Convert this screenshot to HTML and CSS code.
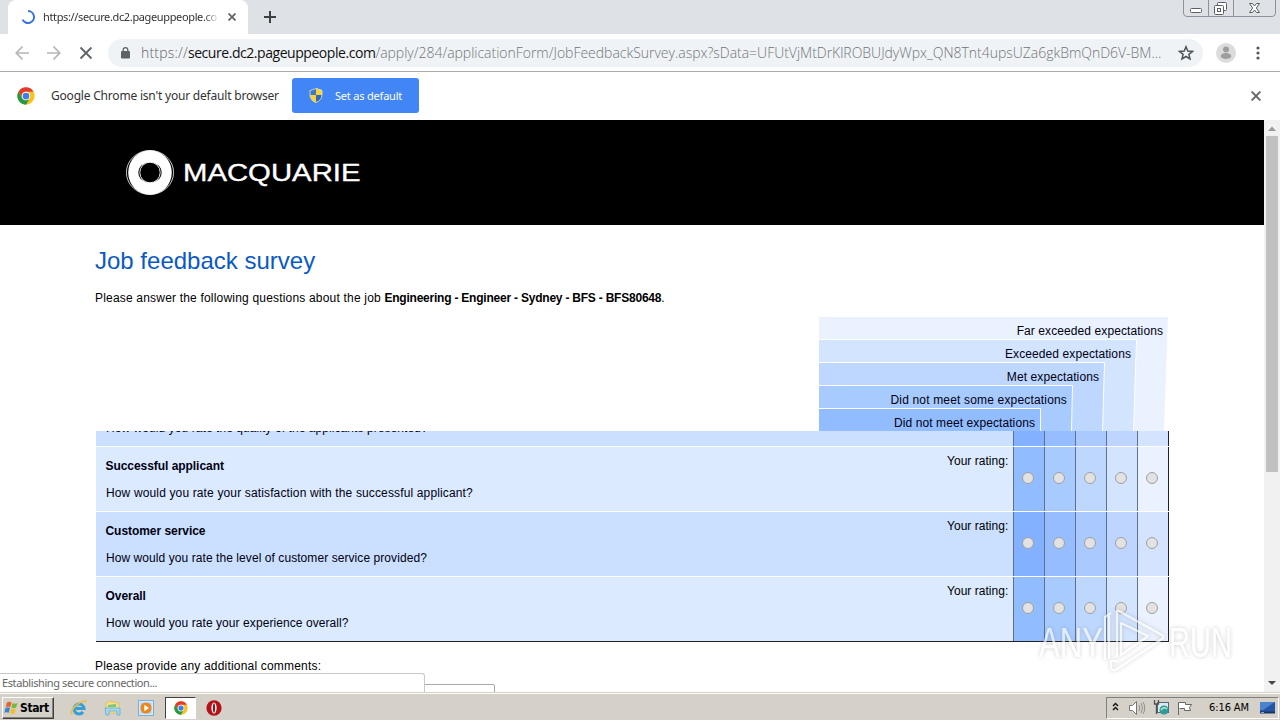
FILE: index.html
```html
<!DOCTYPE html>
<html lang="en">
<head>
<meta charset="utf-8">
<title>Job feedback survey</title>
<link rel="stylesheet" href="styles.css">
</head>
<body>
<svg class="defs" width="0" height="0">
  <symbol id="chrome" viewBox="0 0 48 48">
    <circle cx="24" cy="24" r="23" fill="#fbc116"/>
    <path d="M4 12.5A23 23 0 0 1 44 12.5H24A11.5 11.5 0 0 0 14 29.8Z" fill="#e33b2e"/>
    <path d="M4 12.5A23 23 0 0 0 24 47L34 29.8A11.5 11.5 0 0 1 14 29.8Z" fill="#229a4a"/>
    <circle cx="24" cy="24" r="11.5" fill="#fff"/><circle cx="24" cy="24" r="9" fill="#3f7de8"/>
  </symbol>
</svg>
<div class="screen">
  <div class="tabstrip">
    <div class="tab">
      <svg class="spinner" width="14" height="14" viewBox="0 0 14 14"><path d="M7 1A6 6 0 1 1 1.6 9.6" fill="none" stroke="#3b73dd" stroke-width="2"/></svg>
      <span class="tab-title">https://secure.dc2.pageuppeople.co</span>
      <svg width="8" height="8" viewBox="0 0 8 8"><path d="M.5.5l7 7M7.500.5l-7 7" stroke="#5f6368" stroke-width="1.7"/></svg>
    </div>
    <svg class="newtab" width="12" height="12" viewBox="0 0 12 12"><path d="M6 0v12M0 6h12" stroke="#3c4043" stroke-width="2"/></svg>
    <div class="winbtns">
      <svg width="94" height="17" viewBox="0 0 94 17" fill="none" stroke="#8e929b">
        <path d="M.5 0v13q0 3.500 3.500 3.500h85q3.500 0 3.500-3.500V0M25.500 0v16M50.500 0v16"/>
        <rect x="7.500" y="8.500" width="11" height="4" rx="1" stroke="#5b5e66" fill="#fff"/>
        <g stroke="#5b5e66" fill="#fff"><rect x="34.500" y="2.500" width="9" height="8" rx="1"/><rect x="31.500" y="5.500" width="9" height="9" rx="1"/><rect x="34.500" y="8.500" width="3" height="3"/></g>
        <path d="M66.500 3.500h3l2 2.500 2-2.500h3l-3.200 4.500 3.200 4.500h-3l-2-2.500-2 2.500h-3l3.200-4.500z" stroke="#5b5e66" fill="#fff"/>
      </svg>
    </div>
  </div>

  <div class="toolbar">
    <svg class="nav" width="78" height="14" viewBox="0 0 78 14" fill="none" stroke-width="1.700">
      <path d="M14 7H1M7.500.7L1.200 7l6.300 6.300" stroke="#b5b7ba"/>
      <path d="M32 7h13M38.500.7L44.800 7l-6.300 6.300" stroke="#b5b7ba"/>
      <path d="M65.500 1.500l11 11M76.500 1.500l-11 11" stroke="#5f6368" stroke-width="1.800"/>
    </svg>
    <div class="omnibox">
      <svg class="lock" width="9" height="12" viewBox="0 0 9 12"><rect y="4" width="9" height="7.500" rx="1" fill="#5f6368"/><path d="M2.200 4.500V3a2.300 2.300 0 0 1 4.600 0v1.500" fill="none" stroke="#5f6368" stroke-width="1.300"/></svg>
      <div class="url"><span class="u1">https://</span><span class="u2">secure.dc2.pageuppeople.com</span><span class="u3">/apply/284/applicationForm/JobFeedbackSurvey.aspx?sData=UFUtVjMtDrKlROBUJdyWpx_QN8Tnt4upsUZa6gkBmQnD6V-BM...</span></div>
      <svg class="star" width="16" height="16" viewBox="0 0 16 16"><path d="M8 1.700l1.800 4.300 4.700.4-3.600 3 1.100 4.600-4-2.500L4 14l1.100-4.600-3.600-3 4.700-.4z" fill="none" stroke="#50545a" stroke-width="1.500"/></svg>
    </div>
    <svg class="avatar" width="20" height="20" viewBox="0 0 20 20"><circle cx="10" cy="10" r="10" fill="#dcdcdd"/><circle cx="10" cy="6.500" r="3" fill="#9c9ea0"/><ellipse cx="10" cy="13" rx="5.300" ry="3" fill="#9c9ea0"/></svg>
    <svg class="menu" width="4" height="14" viewBox="0 0 4 14" fill="#55595e"><circle cx="2" cy="2" r="1.600"/><circle cx="2" cy="7" r="1.600"/><circle cx="2" cy="12" r="1.600"/></svg>
  </div>

  <div class="infobar">
    <svg width="18" height="18"><use href="#chrome"/></svg>
    <span class="infotext">Google Chrome isn't your default browser</span>
    <div class="setbtn">
      <svg width="14" height="15" viewBox="0 0 14 15"><path d="M7 0L1 2v5q0 5 6 8z" fill="#3c77c9"/><path d="M7 0l6 2v5q0 5-6 8z" fill="#f8d338"/><path d="M1 7h6v8Q1 12 1 7z" fill="#f8d338"/><path d="M7 7h6q0 5-6 8z" fill="#3369b5"/><path d="M7 .5l6 2V7q0 5-6 7.500Q1 12 1 7V2.500z" fill="none" stroke="#d9dac1" stroke-width=".9"/></svg>
      <span>Set as default</span>
    </div>
    <svg class="infoclose" width="10" height="10" viewBox="0 0 10 10"><path d="M.6.6l8.800 8.800M9.400.6L.6 9.400" stroke="#606367" stroke-width="1.900"/></svg>
  </div>

  <div class="viewport">
    <div class="page">
      <div class="brand">
        <svg width="240" height="46" viewBox="0 0 240 46">
          <ellipse cx="24" cy="22.500" rx="23.600" ry="22" fill="none" stroke="#ddd" stroke-width=".9"/>
          <ellipse cx="24" cy="22.500" rx="21.800" ry="22.200" fill="#fff"/>
          <ellipse cx="24" cy="22.500" rx="11.600" ry="10.300" fill="#000"/>
          <ellipse cx="24" cy="22.500" rx="10.200" ry="10.300" fill="none" stroke="#eee" stroke-width="1"/>
          <text class="wordmark" x="57" y="31" textLength="177.500" lengthAdjust="spacingAndGlyphs">MACQUARIE</text>
        </svg>
      </div>
      <div class="content">
        <h1>Job feedback survey</h1>
        <p class="intro">Please answer the following questions about the job <b>Engineering - Engineer - Sydney - BFS - BFS80648</b>.</p>
        <div class="legend">
          <svg class="steps" width="350" height="114" viewBox="0 0 350 114">
            <path d="M0 0H349L345 114H0z" fill="#eaf2ff"/>
            <path d="M-1 22.500H317.500L314.500 115H-1z" fill="#d3e4ff" stroke="#fff"/>
            <path d="M-1 45.500H285.500L283.500 115H-1z" fill="#bdd7ff" stroke="#fff"/>
            <path d="M-1 68.500H253.500L252.500 115H-1z" fill="#a7caff" stroke="#fff"/>
            <path d="M-1 91.500H221.500V115H-1z" fill="#91bcff" stroke="#fff"/>
          </svg>
          <div class="l1">Far exceeded expectations</div>
          <div class="l2">Exceeded expectations</div>
          <div class="l3">Met expectations</div>
          <div class="l4">Did not meet some expectations</div>
          <div class="l5">Did not meet expectations</div>
        </div>
        <div class="survey">
          <div class="row even cut">
            <div class="q"><p>How would you rate the quality of the applicants presented?</p></div>
            <i class="c1"></i><i class="c2"></i><i class="c3"></i><i class="c4"></i><i class="c5"></i>
          </div>
          <div class="row odd">
            <div class="q"><b>Successful applicant</b><p class="wide">How would you rate your satisfaction with the successful applicant?</p></div><span class="yr">Your rating:</span>
            <i class="c1"><u></u></i><i class="c2"><u></u></i><i class="c3"><u></u></i><i class="c4"><u></u></i><i class="c5"><u></u></i>
          </div>
          <div class="row even">
            <div class="q"><b>Customer service</b><p>How would you rate the level of customer service provided?</p></div><span class="yr">Your rating:</span>
            <i class="c1"><u></u></i><i class="c2"><u></u></i><i class="c3"><u></u></i><i class="c4"><u></u></i><i class="c5"><u></u></i>
          </div>
          <div class="row odd last">
            <div class="q"><b>Overall</b><p>How would you rate your experience overall?</p></div><span class="yr">Your rating:</span>
            <i class="c1"><u></u></i><i class="c2"><u></u></i><i class="c3"><u></u></i><i class="c4"><u></u></i><i class="c5"><u></u></i>
          </div>
        </div>
        <p class="comments">Please provide any additional comments:</p>
        <div class="box"></div>
      </div>
    </div>
    <div class="scroll">
      <svg width="16" height="16"><path d="M4 11l4-4.500 4 4.500z" fill="#9a9a9a"/></svg>
      <div class="thumb"></div>
      <svg class="down" width="16" height="16"><path d="M4 5h8l-4 4z" fill="#454545"/></svg>
    </div>
    <div class="status">Establishing secure connection...</div>
    <svg class="watermark" width="220" height="74" viewBox="0 0 220 74">
      <g class="wm-text">
        <text x="9" y="50" textLength="64" lengthAdjust="spacingAndGlyphs">ANY</text>
        <text x="139" y="50" textLength="63" lengthAdjust="spacingAndGlyphs">RUN</text>
      </g>
      <g class="wm-line" fill="none" stroke-linejoin="round">
        <path d="M87 3l45 25q3 2 0 4L87 62q-6 3-6-2v-6h7"/>
        <path d="M91 16l27 13-27 19z"/>
        <path d="M75 53V10l6-4M79 8v44M87 3v47"/>
      </g>
    </svg>
  </div>

  <div class="taskbar">
    <div class="start">
      <svg width="15" height="14" viewBox="0 0 15 14"><path d="M3 1.500q2.500-1.500 4.500 0L6.300 6Q4 5 1.700 6z" fill="#e6602b"/><path d="M8.500 2q2.500 1.500 5 0L12 6.700q-2.500 1-4.600-.2z" fill="#79b63c"/><path d="M1.500 7q2.500-1.300 4.500 0L4.800 11.800Q2.500 10.800.3 11.800z" fill="#3f83cf"/><path d="M7.200 7.600q2.300 1.300 4.600.2l-1.200 4.700q-2.500 1.200-4.600-.2z" fill="#f3bd27"/></svg>
      <span>Start</span>
    </div>
    <svg class="ti ie" width="18" height="18" viewBox="0 0 18 18" fill="none"><path d="M4.500 9.500h9.500a5 5 0 1 0-1 3.500" stroke="#359fda" stroke-width="3"/><path d="M2 16C-1 11 10 1 16.500 2.500" stroke="#eebf3c" stroke-width="1.600"/></svg>
    <svg class="ti folder" width="17" height="16" viewBox="0 0 17 16"><path d="M2 3l4-2 9 2v10H2z" fill="#f5df86" stroke="#d8b958" stroke-width=".7"/><path d="M4 5l8-1v3H4z" fill="#78c67d"/><path d="M1 8h15v7h-3v-4H5v4H2z" fill="#a2d6f1" stroke="#57a9d6" stroke-width=".7"/></svg>
    <svg class="ti media" width="16" height="16" viewBox="0 0 16 16"><rect x=".5" y=".5" width="15" height="15" fill="#d5eafa" stroke="#78aeda"/><rect x="2.500" y="2.500" width="11" height="11" fill="#a9cfee"/><circle cx="8" cy="8" r="5.500" fill="#ef8418"/><path d="M6.300 4.800L11 8l-4.700 3.200z" fill="#fff"/></svg>
    <div class="active"><svg width="14" height="14"><use href="#chrome"/></svg></div>
    <svg class="ti opera" width="16" height="16" viewBox="0 0 16 16"><ellipse cx="8" cy="8" rx="7.600" ry="7.800" fill="#b21219"/><ellipse cx="8" cy="8" rx="2.600" ry="5.500" fill="#fff"/><ellipse cx="8" cy="8" rx="1.100" ry="4.800" fill="#961117"/></svg>
    <div class="tray">
      <svg width="82" height="18" viewBox="0 0 82 18">
        <path d="M2 7l2.500-2.500L7 7M2 11l2.500-2.500L7 11" fill="none" stroke="#111" stroke-width="1.400"/>
        <path d="M18.500 6.500h3l4-4v13l-4-4h-3z" fill="#fff" stroke="#777"/><path d="M28 6q1.500 3 0 6M30 4q3 5 0 10M32 3q3.500 6 0 12" fill="none" stroke="#888" stroke-width=".9"/>
        <rect x="46.500" y="3.500" width="11" height="10" fill="#dceaf0" stroke="#576871"/><path d="M43.500 1v4h4V1M45.500 5v10" fill="none" stroke="#505050" stroke-width="1.300"/><circle cx="53" cy="11" r="4.500" fill="#2d9b97"/><path d="M50 11q3-4 6-1" fill="none" stroke="#b6ecd0" stroke-width="1.500"/>
        <path d="M67.500 16V3.500h7v2h6l-2 3 1 3h-6v-2h-5" fill="#fff" stroke="#666"/>
      </svg>
      <span class="clock">6:16 AM</span>
      <svg class="desktop" width="15" height="12" viewBox="0 0 15 12"><path d="M0 0h15v10H0z" fill="#2456a5"/><path d="M0 0h15L3 8H0z" fill="#4a83ce"/><path d="M0 10.500h15" stroke="#18345f" stroke-width="2"/><path d="M1 10.500h3" stroke="#8ac" /></svg>
    </div>
  </div>
</div>
</body>
</html>
```
FILE: styles.css
```css
* { box-sizing: border-box; }
body { margin: 0; background: #fff; font-family: "Liberation Sans", Arial, sans-serif; font-size: 12px; color: #000; }
p, h1 { margin: 0; font-weight: normal; }
svg { display: block; flex: none; }
.defs { position: absolute; }
.screen { width: 1280px; height: 720px; overflow: hidden; display: flex; flex-direction: column; }
.tabstrip, .toolbar, .infobar, .status { font-family: "Noto Sans", sans-serif; }

.tabstrip { height: 34px; background: #dee1e6; display: flex; flex: none; padding-left: 8px; }
.tab { width: 240px; background: #fff; border-radius: 8px 8px 0 0; display: flex; align-items: center; padding: 0 12px 0 13px; }
.tab-title { width: 177px; margin: 0 8px; overflow: hidden; white-space: nowrap; font-size: 11px; line-height: 16px; letter-spacing: -.36px; color: #333; -webkit-mask-image: linear-gradient(90deg, #000 91%, transparent); mask-image: linear-gradient(90deg, #000 91%, transparent); }
.newtab { margin: 11px 0 0 16px; }
.winbtns { margin: 0 3px 0 auto; }

.toolbar { height: 38px; flex: none; border-bottom: 1px solid #a9aaab; display: flex; align-items: center; padding-left: 15px; }
.nav { margin-right: 15px; }
.omnibox { width: 1095px; height: 28px; border-radius: 14px; background: #f0f3f5; display: flex; align-items: center; padding-left: 13px; }
.url { width: 1037px; margin-left: 11px; white-space: nowrap; font-size: 14px; font-family: "Open Sans", sans-serif; color: #70757a; font-weight: 300; }
.u1 { color: #5f6368; letter-spacing: .2px; }
.u2 { color: #111; font-weight: 400; letter-spacing: -.45px; }
.u3 { letter-spacing: -.02px; }
.avatar { margin-left: 13px; }
.menu { margin-left: 20px; }

.infobar { height: 48px; flex: none; display: flex; align-items: center; padding: 0 0 1px 17px; }
.infotext { width: 228px; margin: 0 13px 0 16px; font-size: 12px; letter-spacing: -.2px; color: #333; white-space: nowrap; }
.setbtn { width: 127px; height: 35px; background: #4285f4; color: #fff; border-radius: 3px; display: flex; align-items: center; gap: 12px; padding: 0 0 1px 17px; font-size: 11px; letter-spacing: -.2px; white-space: nowrap; }
.infoclose { margin: 1px 19px 0 auto; }

.viewport { height: 572px; flex: none; display: flex; position: relative; overflow: hidden; }
.page { width: 1264px; }
.brand { height: 105px; background: #000; padding: 30px 0 0 126px; }
.wordmark { font: 24px "Liberation Sans", Arial, sans-serif; fill: #fff; stroke: #fff; stroke-width: .35px; }
.content { padding: 21px 0 0 95px; }
h1 { font-size: 24px; line-height: 30px; letter-spacing: 0; color: #0a5ac4; }
.intro { margin-top: 14px; line-height: 16px; white-space: nowrap; letter-spacing: .19px; }
.intro b { letter-spacing: -.22px; }
.legend { width: 350px; height: 114px; margin: 11px 0 0 724px; position: relative; }
.steps { position: absolute; left: 0; top: 0; }
.legend div { position: relative; height: 23px; line-height: 28px; text-align: right; letter-spacing: .09px; color: #001; }
.l1 { width: 344px; } .l2 { width: 312px; } .l3 { width: 280px; } .l4 { width: 248px; } .l5 { width: 216px; }
.legend .l4 { letter-spacing: .17px; }
.survey { width: 1073px; margin-left: 1px; }
.row { display: grid; grid-template-columns: 1fr 71px repeat(4, 31px) 32px; height: 65px; border-bottom: 1px solid #fff; }
.row.cut { height: 16px; overflow: hidden; grid-template-columns: 1fr repeat(4, 31px) 32px; }
.cut .q { height: 15px; padding-top: 0; overflow: hidden; }
.cut .q p { margin-top: -10px; }
.row.last { border-bottom-color: #222; }
.q { padding: 12px 0 0 10px; line-height: 15px; color: #001; }
.q b { display: block; margin-left: -.5px; letter-spacing: -.05px; }
.q p { margin-top: 12px; letter-spacing: .07px; }
.q .wide { letter-spacing: .14px; }
.yr { padding-top: 7px; line-height: 15px; letter-spacing: .03px; white-space: nowrap; padding-left: 5px; }
.odd { background: #dbeaff; }
.even { background: #cbdfff; }
.row i { border-left: 1px solid #5f7190; padding: 25px 0 0 8px; }
.row .c5 { border-right: 1px solid #222; }
.row u { display: block; width: 12px; height: 12px; border-radius: 50%; border: 1px solid #a0a0a0; background: #e2e2e2; }
.odd .c1 { background: #91bcff; } .odd .c2 { background: #a7caff; } .odd .c3 { background: #bdd7ff; } .odd .c4 { background: #d3e4ff; } .odd .c5 { background: #eaf2ff; }
.even .c1 { background: #83b0ff; } .even .c2 { background: #96bdff; } .even .c3 { background: #aac9ff; } .even .c4 { background: #bed6ff; } .even .c5 { background: #d4e3ff; }
.comments { margin-top: 16px; line-height: 16px; letter-spacing: .19px; }
.box { width: 400px; height: 60px; margin-top: 10px; border: 1px solid #a9a9a9; border-radius: 2px; }

.scroll { width: 16px; background: #f1f1f1; display: flex; flex-direction: column; align-items: center; }
.thumb { width: 12px; height: 336px; background: #c1c1c1; }
.down { margin-top: auto; }
.status { position: absolute; left: -1px; bottom: 0; width: 426px; height: 19px; background: #fff; border: 1px solid #c8c8c8; border-bottom: 0; border-radius: 0 3px 0 0; padding-left: 2px; line-height: 18px; font-size: 11px; letter-spacing: -.4px; color: #666; }
.watermark { position: absolute; left: 1030px; top: 487px; filter: drop-shadow(0 0 2px rgba(90,90,90,.45)); opacity: .65; }
.wm-text { font: 42px "Liberation Sans", Arial, sans-serif; fill: #fff; }
.wm-line { stroke: #fff; stroke-width: 2.2px; }

.taskbar { height: 28px; flex: none; background: #d5d0c8; border-top: 1px solid #d5d0c8; box-shadow: inset 0 1px #fff; display: flex; align-items: center; padding-left: 2px; font-family: "DejaVu Sans Condensed", "DejaVu Sans", sans-serif; font-size: 11px; }
.start { width: 52px; height: 22px; margin-top: 2px; display: flex; align-items: center; padding-left: 1px; gap: 1px; font-weight: bold; border: 1px solid; border-color: #fff #404040 #404040 #fff; box-shadow: inset -1px -1px #858079; font-size: 12px; letter-spacing: -.4px; }
.ti { margin-top: 2px; }
.ie { margin-left: 16px; }
.folder { margin-left: 16px; }
.media { margin-left: 17px; }
.active { width: 31px; height: 22px; margin: 2px 0 0 11px; border: 1px solid; border-color: #404040 #fff #fff #404040; background: #fff; display: flex; align-items: center; justify-content: center; }
.opera { margin-left: 10px; }
.tray { width: 173px; height: 22px; margin: 2px 1px 0 auto; border: 1px solid; border-color: #808080 #fff #fff #808080; display: flex; align-items: center; padding-left: 4px; }
.clock { margin-left: 16px; width: 43px; white-space: nowrap; letter-spacing: -.1px; }
.desktop { margin-left: 8px; }
```
